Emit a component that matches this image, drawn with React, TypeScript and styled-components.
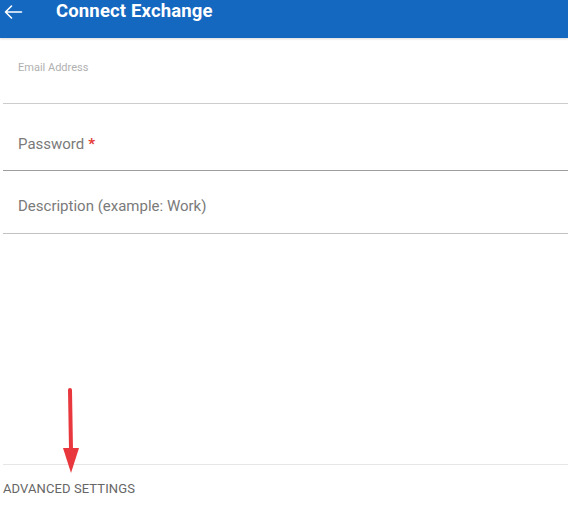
import React from "react";
import styled, { createGlobalStyle } from "styled-components";

const GlobalStyle = createGlobalStyle`
  html, body {
    margin: 0;
    padding: 0;
    background: #ffffff;
    font-family: Roboto, "Liberation Sans", Arial, sans-serif;
  }
`;

const Page = styled.div`
  position: relative;
  display: flex;
  flex-direction: column;
  width: 568px;
  height: 519px;
  overflow: hidden;
  background: #ffffff;
`;

const Header = styled.header`
  display: flex;
  align-items: flex-start;
  height: 38px;
  background: #1568c0;
  box-shadow: 0 1px 2px rgba(0, 0, 0, 0.15);
  color: #ffffff;
  box-sizing: border-box;
`;

const BackButton = styled.button`
  display: flex;
  align-items: center;
  justify-content: flex-start;
  width: 28px;
  height: 24px;
  padding: 0 0 0 2px;
  border: 0;
  background: transparent;
  color: #ffffff;
  cursor: pointer;
`;

const Title = styled.h1`
  margin: 0 0 0 28px;
  font-size: 18.5px;
  line-height: 22px;
  font-weight: 700;
  letter-spacing: 0.15px;
`;

const Form = styled.div`
  display: flex;
  flex-direction: column;
  margin-left: 3px;
`;

const Field = styled.div<{ $height: number; $top: number; $line: string }>`
  height: ${(p) => p.$height}px;
  padding: ${(p) => p.$top}px 0 0 15px;
  box-sizing: border-box;
  border-bottom: 1px solid ${(p) => p.$line};
`;

const SmallLabel = styled.div`
  font-size: 11px;
  line-height: 13px;
  color: #b0b0b0;
`;

const Placeholder = styled.div`
  font-size: 15px;
  line-height: 17px;
  color: #7a7a7a;
`;

const Required = styled.span`
  color: #e53935;
  margin-left: 4px;
  font-weight: 700;
`;

const Spacer = styled.div`
  flex: 1;
`;

const Advanced = styled.div`
  margin-left: 3px;
  height: 55px;
  padding-top: 16px;
  box-sizing: border-box;
  border-top: 1px solid #e6e6e6;
  font-size: 13px;
  line-height: 15px;
  color: #666666;
  letter-spacing: 0.1px;
  text-transform: uppercase;
`;

const Annotation = styled.svg`
  position: absolute;
  left: 60px;
  top: 388px;
  pointer-events: none;
`;

export default function App() {
  return (
    <Page>
      <GlobalStyle />
      <Header>
        <BackButton aria-label="Back">
          <svg width="22" height="16" viewBox="0 0 22 16">
            <path
              d="M19.5 8H3.5M9.5 2L3.5 8l6 6"
              fill="none"
              stroke="#ffffff"
              strokeWidth="1.6"
              strokeLinecap="round"
              strokeLinejoin="round"
            />
          </svg>
        </BackButton>
        <Title>Connect Exchange</Title>
      </Header>
      <Form>
        <Field $height={66} $top={23} $line="#cccccc">
          <SmallLabel>Email Address</SmallLabel>
        </Field>
        <Field $height={67} $top={32} $line="#9e9e9e">
          <Placeholder>
            Password<Required>*</Required>
          </Placeholder>
        </Field>
        <Field $height={63} $top={27} $line="#c2c2c2">
          <Placeholder>Description (example: Work)</Placeholder>
        </Field>
      </Form>
      <Spacer />
      <Advanced>Advanced Settings</Advanced>
      <Annotation width="22" height="88" viewBox="0 0 22 88">
        <path d="M10 2L11 62" stroke="#e8383d" strokeWidth="4" strokeLinecap="round" />
        <path d="M3 60L19 60L11 85Z" fill="#e8383d" />
      </Annotation>
    </Page>
  );
}
